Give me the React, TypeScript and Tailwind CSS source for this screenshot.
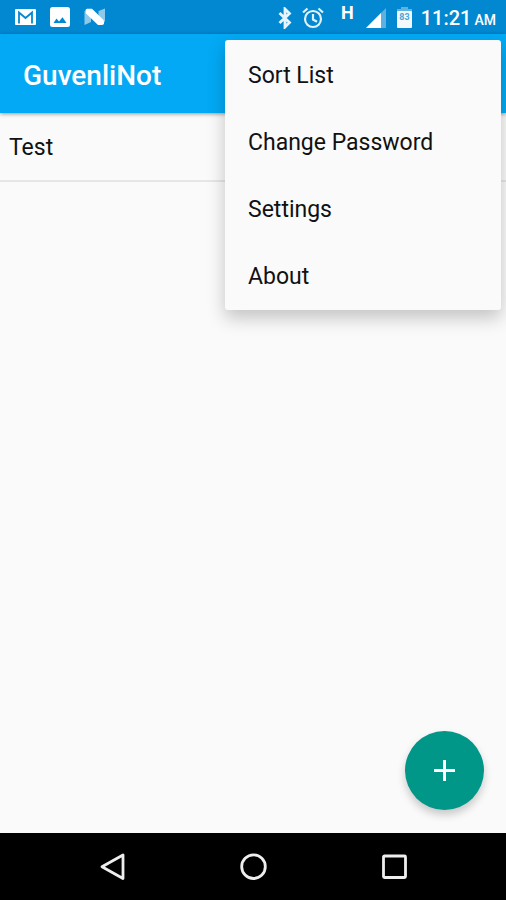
import { useState } from 'react'

const notes = ['Test']

const menuItems = ['Sort List', 'Change Password', 'Settings', 'About']

function GmailIcon() {
  return (
    <svg width="21" height="18" viewBox="0 0 21 18" aria-hidden="true">
      <rect y="1" width="21" height="16" rx="1" fill="#fff" />
      <path
        d="M4 15.500V4.500l6.500 5.500L17 4.500v11"
        fill="none"
        stroke="#0288d1"
        strokeWidth="1.800"
      />
    </svg>
  )
}

function PictureIcon() {
  return (
    <svg width="20" height="20" viewBox="0 0 20 20" aria-hidden="true">
      <rect width="20" height="20" rx="2.500" fill="#fff" />
      <path
        d="M3.500 16l3-4.500 2.500 3 3.500-4.200 4 5.700z"
        fill="#0288d1"
      />
    </svg>
  )
}

function NougatIcon() {
  return (
    <svg width="22" height="18" viewBox="0 0 22 18" aria-hidden="true">
      <path d="M.500 3L7 7.500V14L.500 17zM21 .500V14l-6.500-3V3z" fill="#8ec9ec" />
      <path
        d="M3 .800h5L19.500 12q2 5-2 5H14L2 5.500Q.500 1.500 3 .800z"
        fill="#fff"
      />
    </svg>
  )
}

function BluetoothIcon() {
  return (
    <svg width="14" height="22" viewBox="0 0 14 22" aria-hidden="true">
      <path
        d="M1.500 6l10 9.500L7 20V2l4.500 4.500-10 9.500"
        fill="none"
        stroke="#e8f4fb"
        strokeWidth="2.800"
      />
    </svg>
  )
}

function AlarmIcon() {
  return (
    <svg
      width="22"
      height="22"
      viewBox="0 0 22 22"
      fill="none"
      stroke="#e1f1fa"
      strokeWidth="2.200"
      aria-hidden="true"
    >
      <circle cx="11" cy="12" r="8" />
      <path d="M11 7v5.500l4 2.300M1 5.500l4.500-4M21 5.500l-4.500-4" />
    </svg>
  )
}

function SignalIcon() {
  return (
    <svg width="20" height="20" viewBox="0 0 20 20" aria-hidden="true">
      <path d="M0 20L20 0v20z" fill="#5cb1e0" />
      <path d="M0 20L15 5v15z" fill="#fff" />
    </svg>
  )
}

function BatteryIcon() {
  return (
    <svg width="15" height="21" viewBox="0 0 15 21" aria-hidden="true">
      <path d="M4 0h7v2h4v3H0V2h4z" fill="#5fb2e0" />
      <rect y="4" width="15" height="17" rx="1" fill="#f2f9fd" />
      <text
        x="7.500"
        y="13"
        textAnchor="middle"
        fontFamily="Roboto, sans-serif"
        fontSize="9"
        fontWeight="700"
        fill="#4aa5d8"
      >
        83
      </text>
    </svg>
  )
}

function StatusBar() {
  return (
    <div className="flex h-[34px] items-center justify-between bg-[#0288d1] pr-[10px] pl-[15px] text-white">
      <div className="flex items-center gap-[14px]">
        <GmailIcon />
        <PictureIcon />
        <NougatIcon />
      </div>
      <div className="flex items-center pt-px">
        <BluetoothIcon />
        <div className="ml-[10px]">
          <AlarmIcon />
        </div>
        <span className="ml-[17px] self-start text-lg leading-5 font-bold">
          H
        </span>
        <div className="ml-3">
          <SignalIcon />
        </div>
        <div className="ml-[11px]">
          <BatteryIcon />
        </div>
        <time className="ml-[9px] flex items-baseline gap-[3px] pt-px text-xl font-medium">
          11:21 <span className="text-sm">AM</span>
        </time>
      </div>
    </div>
  )
}

function OverflowMenu() {
  return (
    <div
      role="menu"
      className="absolute top-[6px] right-[5px] z-20 flex w-[276px] flex-col rounded-[3px] bg-[#fafafa] pt-px pb-px shadow-[0_8px_18px_rgba(0,0,0,0.22)]"
    >
      {menuItems.map((item) => (
        <button
          key={item}
          type="button"
          role="menuitem"
          className="h-[67px] px-[23px] pt-1 text-left text-[23px]"
        >
          {item}
        </button>
      ))}
    </div>
  )
}

function NavigationBar() {
  return (
    <nav className="flex h-[67px] items-center justify-center gap-[113px] bg-black">
      <button type="button" aria-label="Back">
        <svg width="28" height="28" viewBox="0 0 28 28" aria-hidden="true">
          <path
            d="M25 2v23.500L4 13.700z"
            fill="none"
            stroke="#eee"
            strokeWidth="2.800"
            strokeLinejoin="round"
          />
        </svg>
      </button>
      <button type="button" aria-label="Home">
        <svg width="28" height="28" viewBox="0 0 28 28" aria-hidden="true">
          <circle
            cx="14.500"
            cy="13.700"
            r="11.800"
            fill="none"
            stroke="#eee"
            strokeWidth="2.800"
          />
        </svg>
      </button>
      <button type="button" aria-label="Recent apps">
        <svg width="28" height="28" viewBox="0 0 28 28" aria-hidden="true">
          <rect
            x="3.500"
            y="3"
            width="22"
            height="21.500"
            rx="1"
            fill="none"
            stroke="#eee"
            strokeWidth="2.800"
          />
        </svg>
      </button>
    </nav>
  )
}

export default function App() {
  const [menuOpen] = useState(true)

  return (
    <div className="flex min-h-screen flex-col bg-[#fafafa] font-['Roboto',sans-serif] text-[#111]">
      <StatusBar />
      <header className="relative z-10 flex h-[79px] items-center bg-[#03a9f4] px-[23px] pt-1 shadow-[0_1px_4px_rgba(0,0,0,0.4)]">
        <h1 className="text-[28px] font-medium text-white">GuvenliNot</h1>
        {menuOpen && <OverflowMenu />}
      </header>
      <main className="relative flex-1">
        <ul>
          {notes.map((note) => (
            <li
              key={note}
              className="flex h-[69px] items-center border-b-2 border-[#e6e6e6] px-[9px] pt-1 text-[23px]"
            >
              {note}
            </li>
          ))}
        </ul>
        <button
          type="button"
          aria-label="Add note"
          className="absolute right-[22px] bottom-[23px] flex size-[79px] items-center justify-center rounded-full bg-[#009688] shadow-[0_5px_9px_rgba(0,0,0,0.2)]"
        >
          <svg width="21" height="21" viewBox="0 0 21 21" aria-hidden="true">
            <path d="M10.500 0v21M0 10.500h21" stroke="#fff" strokeWidth="3" />
          </svg>
        </button>
      </main>
      <NavigationBar />
    </div>
  )
}
